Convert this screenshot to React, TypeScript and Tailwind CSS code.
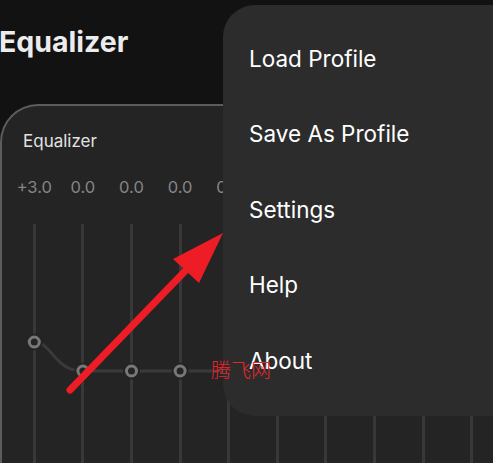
import React from 'react';

const values = ['+3.0', '0.0', '0.0', '0.0', '0.0', '0.0', '0.0', '0.0', '0.0', '0.0'];
const menuItems = ['Load Profile', 'Save As Profile', 'Settings', 'Help', 'About'];

function EqCurve() {
    // handle positions inside the tracks area (first band boosted)
    const colW = 48.6;
    const handles = values.map((v, i) => ({ x: colW * i + colW / 2, y: i === 0 ? 118 : 147 }));
    return (
        <svg className="absolute inset-0" width="500" height="300" viewBox="0 0 500 300">
            <path
                d={`M ${handles[0].x} 118 C 42 118, 44 147, 72.9 147 L 500 147`}
                fill="none"
                stroke="#3a3a3a"
                strokeWidth="3"
            />
            {handles.map((h, i) => (
                <g key={i}>
                    <circle cx={h.x} cy={h.y} r="8.5" fill="#242424" />
                    <circle cx={h.x} cy={h.y} r="5" fill="#242424" stroke="#787878" strokeWidth="3" />
                </g>
            ))}
        </svg>
    );
}

export default function App() {
    return (
        <div className="relative w-[493px] h-[463px] overflow-hidden bg-[#121212] font-['Inter',sans-serif]">
            <h1 className="pt-[25px] leading-[34px] text-[28.5px] font-bold text-[#ececec] -ml-[1px]">
                Equalizer
            </h1>

            <div className="mt-[45px] w-[600px] h-[400px] bg-[#242424] rounded-tl-[38px] border-t-2 border-l-2 border-[#5c5c5c]">
                <div className="pl-[21px] pt-[25px] text-[17px] leading-[20px] text-[#e2e2e2]">Equalizer</div>

                <div className="pl-[8px] mt-[26px] flex">
                    {values.map((v, i) => (
                        <div key={i} className="w-[48.6px] shrink-0 text-center text-[16.5px] leading-[20px] text-[#858585]">
                            {v}
                        </div>
                    ))}
                </div>

                <div className="relative ml-[8px] mt-[27px] h-[300px] flex">
                    {values.map((_, i) => (
                        <div key={i} className="w-[48.6px] shrink-0 flex justify-center">
                            <div className="w-[3px] h-full bg-[#383838]" />
                        </div>
                    ))}
                    <EqCurve />
                </div>
            </div>

            {/* overflow menu */}
            <div className="absolute left-[223px] top-[5px] w-[300px] pt-[16px] pb-[17px] bg-[#2c2c2c] rounded-l-[32px]">
                {menuItems.map((item) => (
                    <div key={item} className="h-[75.5px] flex items-center pl-[26px] text-[22.5px] text-white">
                        {item}
                    </div>
                ))}
            </div>

            {/* annotation arrow */}
            <svg className="absolute inset-0 pointer-events-none" width="493" height="463">
                <line x1="70" y1="390" x2="190" y2="266" stroke="#ee1c25" strokeWidth="7" strokeLinecap="round" />
                <polygon points="223,233 173,259 199,283" fill="#ee1c25" />
            </svg>

            <div className="absolute left-[211px] top-[357px] text-[20px] leading-[26px] font-light text-[#e8262b] font-['Noto_Sans_CJK_SC',sans-serif]">
                腾飞网
            </div>
        </div>
    );
}
